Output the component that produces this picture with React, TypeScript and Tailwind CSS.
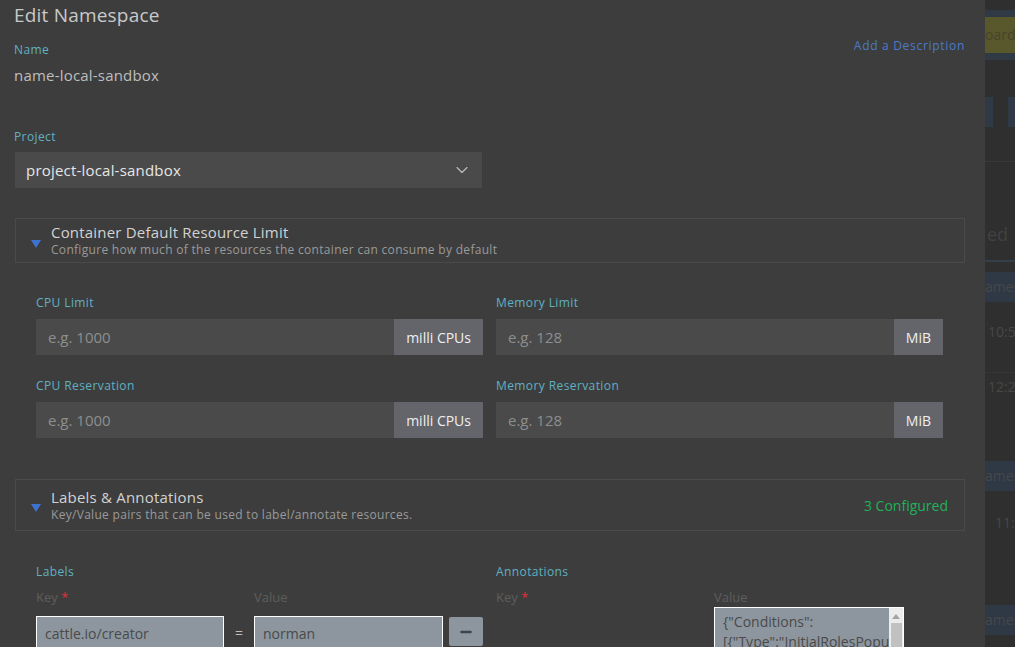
import { ChevronDown, Minus } from "lucide-react";

const font = { fontFamily: '"Open Sans", "Noto Sans", sans-serif' };

const FieldLabel = ({ children }: { children: React.ReactNode }) => (
  <div className="text-[12px] leading-4 tracking-[0.4px] text-[#5fb1c2]">{children}</div>
);

const UnitInput = ({ label, placeholder, unit }: { label: string; placeholder: string; unit: string }) => (
  <div>
    <FieldLabel>{label}</FieldLabel>
    <div className="mt-[8px] flex h-[36px]">
      <div className="flex flex-1 items-center bg-[#4a4a4a] px-[12px] text-[15px] text-[#8e8e8e]">{placeholder}</div>
      <div className="flex items-center bg-[#63656a] px-[12px] text-[14px] text-[#f0f0f0]">{unit}</div>
    </div>
  </div>
);

const Accordion = ({ title, sub, right, tall }: { title: string; sub: string; right?: string; tall?: boolean }) => (
  <div className={`flex items-center border border-[#4a4a4a] pl-[15px] pr-[16px] ${tall ? "h-[52px]" : "h-[45px]"}`}>
    <svg width="10" height="8" viewBox="0 0 10 8" className="mt-[6px] shrink-0">
      <path d="M0 0 H10 L5 8 Z" fill="#3d73cf" />
    </svg>
    <div className="ml-[10px] flex-1">
      <div className="text-[15px] leading-[18px] tracking-[0.2px] text-[#d2d2d2]">{title}</div>
      <div className="mt-[1px] text-[12px] leading-[16px] tracking-[0.3px] text-[#9a9a9a]">{sub}</div>
    </div>
    {right && <div className="text-[14px] text-[#21b159]">{right}</div>}
  </div>
);

const Backdrop = () => (
  <div className="flex w-[30px] shrink-0 flex-col overflow-hidden bg-[#2f2f2f] text-[14px] text-[#474747]">
    <div className="mt-[10px] flex h-[50px] items-center bg-[#2f3a44]">
      <div className="h-[36px] w-full bg-[#58582c] text-[#45452a] leading-[36px]">oard</div>
    </div>
    <div className="mt-[37px] flex h-[30px] gap-[15px]">
      <div className="w-[8px] bg-[#2f3a46]" />
      <div className="w-[8px] bg-[#2f3a46]" />
    </div>
    <div className="mt-[34px] h-px bg-[#383838]" />
    <div className="mt-[60px] pl-[2px] text-[18px] leading-[24px] text-[#414141]">ed</div>
    <div className="mt-[14px] h-[2px] bg-[#33404c]" />
    <div className="mt-[10px] h-[30px] bg-[#2e3945] leading-[30px]">ames</div>
    <div className="mt-[20px] pl-[3px] leading-[20px]">10:59</div>
    <div className="mt-[30px] h-px bg-[#363636]" />
    <div className="mt-[4px] pl-[3px] leading-[20px]">12:2</div>
    <div className="mt-[64px] h-[30px] bg-[#2e3945] leading-[30px]">ames</div>
    <div className="mt-[22px] pl-[10px] leading-[20px]">11:19</div>
    <div className="mt-[72px] h-[30px] bg-[#2e3945] leading-[30px]">ames</div>
  </div>
);

export default function App() {
  return (
    <div className="flex h-[647px] w-[1015px] overflow-hidden" style={font}>
      <div className="w-[985px] shrink-0 bg-[#3d3d3d] pl-[15px] pr-[20px]">
        <div className="-ml-[1px] pt-[3px] text-[19px] leading-[24px] tracking-[0.2px] text-[#c9c9c9]">Edit Namespace</div>

        <div className="mt-[15px] flex items-start justify-between">
          <div className="-ml-[1px]">
            <FieldLabel>Name</FieldLabel>
            <div className="mt-[8px] text-[15px] leading-[18px] tracking-[0.2px] text-[#bdbdbd]">name-local-sandbox</div>
          </div>
          <div className="-mt-[4px] text-[12px] leading-4 tracking-[0.7px] text-[#4b7bc8]">Add a Description</div>
        </div>

        <div className="mt-[45px] -ml-[1px]">
          <FieldLabel>Project</FieldLabel>
        </div>
        <div className="mt-[7px] flex h-[36px] w-[467px] items-center justify-between bg-[#4a4a4a] pl-[11px] pr-[10px] text-[15px] tracking-[0.2px] text-[#e6e6e6]">
          <span>project-local-sandbox</span>
          <ChevronDown size={20} strokeWidth={1.3} color="#bdbdbd" />
        </div>

        <div className="mt-[30px]">
          <Accordion title="Container Default Resource Limit" sub="Configure how much of the resources the container can consume by default" />
        </div>

        <div className="mt-[32px] grid grid-cols-[447px_447px] gap-x-[13px] gap-y-[23px] pl-[21px]">
          <UnitInput label="CPU Limit" placeholder="e.g. 1000" unit="milli CPUs" />
          <UnitInput label="Memory Limit" placeholder="e.g. 128" unit="MiB" />
          <UnitInput label="CPU Reservation" placeholder="e.g. 1000" unit="milli CPUs" />
          <UnitInput label="Memory Reservation" placeholder="e.g. 128" unit="MiB" />
        </div>

        <div className="mt-[41px]">
          <Accordion title="Labels & Annotations" sub="Key/Value pairs that can be used to label/annotate resources." right="3 Configured" tall />
        </div>

        <div className="mt-[33px] grid grid-cols-[447px_447px] gap-x-[13px] pl-[21px]">
          <div>
            <FieldLabel>Labels</FieldLabel>
            <div className="mt-[9px] flex text-[13px] leading-4 text-[#5d5d5d]">
              <div className="w-[218px]">
                Key <span className="text-[#e0303a]">*</span>
              </div>
              <div>Value</div>
            </div>
            <div className="mt-[11px] flex items-start">
              <div className="flex h-[34px] w-[188px] items-center border border-white bg-[#8d969e] px-[8px] text-[14px] text-[#4a4a4a]">
                cattle.io/creator
              </div>
              <div className="w-[30px] pt-[6px] text-center text-[14px] text-[#bdbdbd]">=</div>
              <div className="flex h-[34px] w-[189px] items-center border border-white bg-[#8d969e] px-[8px] text-[14px] text-[#4a4a4a]">
                norman
              </div>
              <div className="ml-[6px] mt-px flex h-[29px] w-[34px] items-center justify-center rounded-[2px] bg-[#8d969e]">
                <Minus size={16} strokeWidth={3.5} color="#3f4448" />
              </div>
            </div>
          </div>
          <div>
            <FieldLabel>Annotations</FieldLabel>
            <div className="mt-[9px] flex text-[13px] leading-4 text-[#5d5d5d]">
              <div className="w-[218px]">
                Key <span className="text-[#e0303a]">*</span>
              </div>
              <div>Value</div>
            </div>
            <div className="ml-[218px] mt-[2px] flex h-[60px] w-[190px] border border-white bg-[#8d969e]">
              <div className="flex-1 overflow-hidden px-[8px] pt-[4px] text-[14px] leading-[20px] text-[#4a4a4a]">
                <div>{'{"Conditions":'}</div>
                <div className="whitespace-nowrap">{'[{"Type":"InitialRolesPopul'}</div>
              </div>
              <div className="flex w-[14px] flex-col items-center bg-[#ececec] pt-[6px]">
                <svg width="8" height="5" viewBox="0 0 8 5">
                  <path d="M0 5 L4 0 L8 5 Z" fill="#a3a3a3" />
                </svg>
                <div className="mt-[4px] h-[40px] w-[11px] bg-[#c1c1c1]" />
              </div>
            </div>
          </div>
        </div>
      </div>
      <Backdrop />
    </div>
  );
}
